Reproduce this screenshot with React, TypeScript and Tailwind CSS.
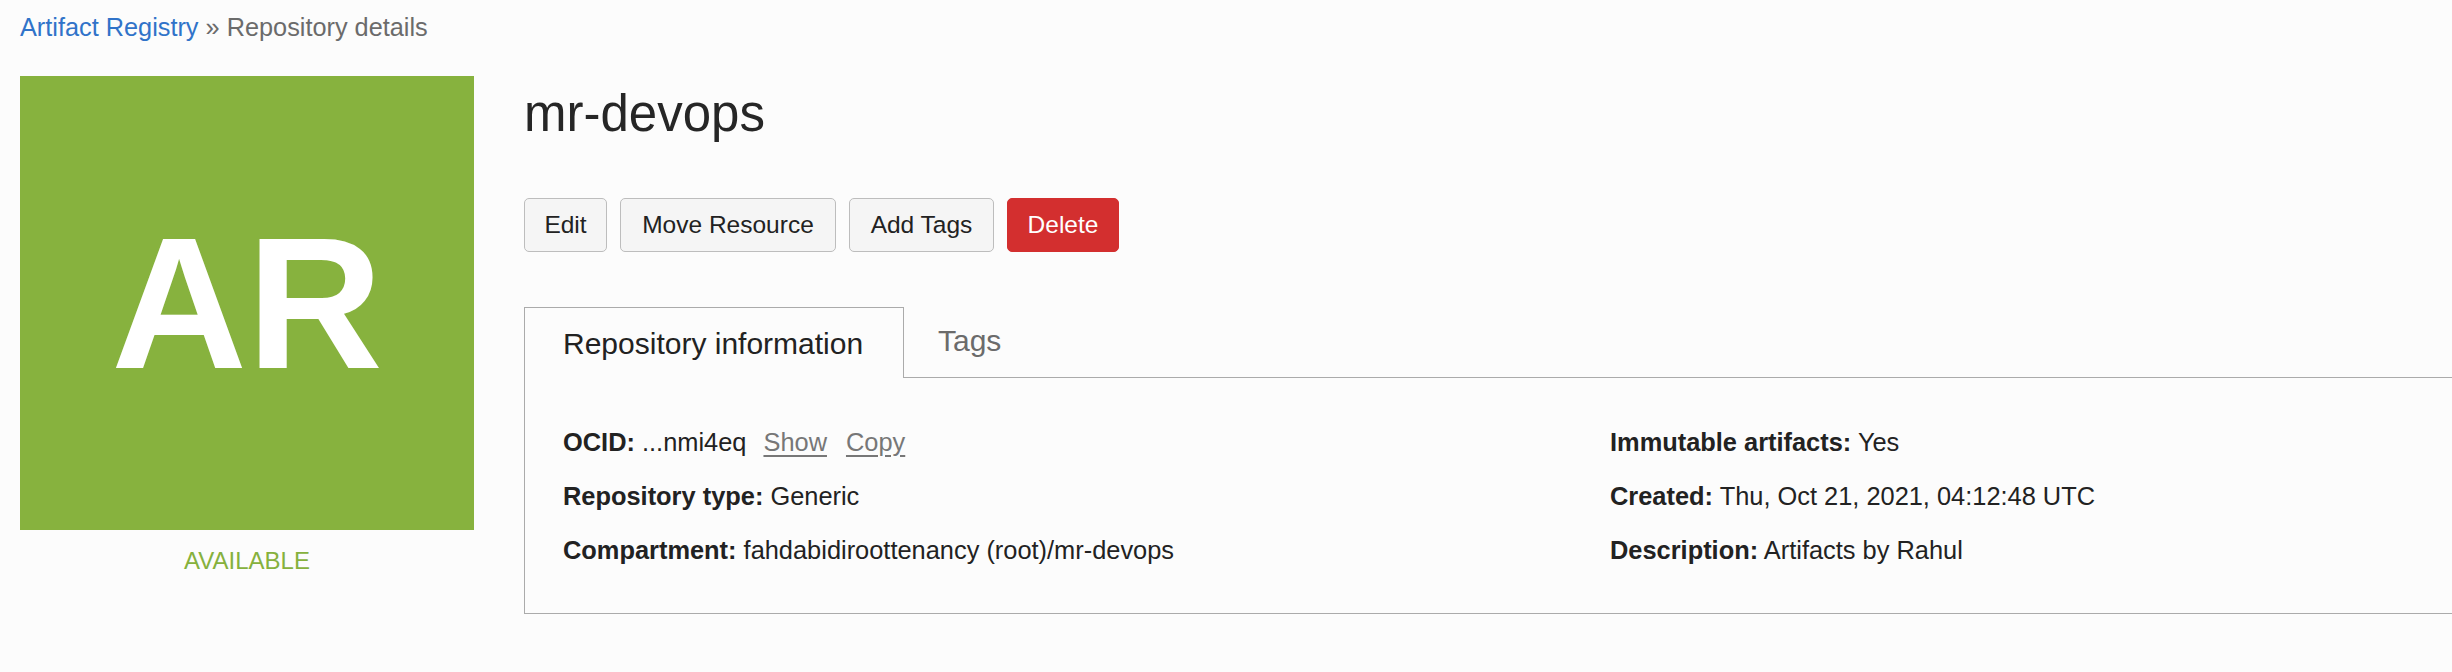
import React from 'react';

const font = { fontFamily: '"Liberation Sans", Arial, Helvetica, sans-serif' };

function ActionButton({ label, width, danger }: { label: string; width: string; danger?: boolean }) {
  return (
    <button
      className={
        danger
          ? `${width} h-[54px] flex items-center justify-center rounded-[5px] border border-[#d32f2f] bg-[#d32f2f] text-white text-[24.5px]`
          : `${width} h-[54px] flex items-center justify-center rounded-[5px] border border-[#bdbdbd] bg-[#f5f5f5] text-[#222] text-[24.5px]`
      }
    >
      {label}
    </button>
  );
}

function Field({ label, children }: { label: string; children: React.ReactNode }) {
  return (
    <div className="h-[54px] leading-[54px] text-[25.4px] text-[#222] whitespace-nowrap">
      <span className="font-bold">{label}</span> {children}
    </div>
  );
}

export default function App() {
  return (
    <div className="min-h-screen w-full overflow-hidden bg-[#fcfcfc] pl-[20px]" style={font}>
      {/* breadcrumb */}
      <div className="pt-[9px] text-[25.3px] leading-[36px]">
        <span className="text-[#3073c9]">Artifact Registry</span>
        <span className="text-[#6b6b6b]"> » Repository details</span>
      </div>

      <div className="mt-[31px] flex">
        {/* resource badge */}
        <div className="w-[454px] shrink-0 flex flex-col items-center">
          <div className="w-[454px] h-[454px] bg-[#87b23e] flex items-center justify-center">
            <span className="text-white font-bold text-[188px] leading-none">AR</span>
          </div>
          <div className="mt-[13px] text-[24px] leading-[36px] text-[#86b13d]">AVAILABLE</div>
        </div>

        {/* details */}
        <div className="ml-[50px] flex-1 min-w-0">
          <h1 className="mt-[12px] text-[51px] leading-[51px] text-[#262626]">mr-devops</h1>

          <div className="mt-[59px] flex gap-[13px]">
            <ActionButton label="Edit" width="w-[83px]" />
            <ActionButton label="Move Resource" width="w-[216px]" />
            <ActionButton label="Add Tags" width="w-[145px]" />
            <ActionButton label="Delete" width="w-[112px]" danger />
          </div>

          {/* tabs */}
          <div className="mt-[55px] flex">
            <div className="w-[380px] h-[71px] flex items-center pl-[38px] border-t border-l border-r border-[#ababab] bg-[#fcfcfc] text-[30px] text-[#222] whitespace-nowrap">
              Repository information
            </div>
            <div className="flex-1 h-[71px] flex items-center pl-[34px] pb-[3px] border-b border-[#ababab] text-[30px] text-[#6b6b6b]">
              Tags
            </div>
          </div>

          <div className="border-l border-b border-[#ababab] pl-[38px] pt-[37px] pb-[36px] grid grid-cols-[1047px_1fr]">
            <div>
              <Field label="OCID:">
                ...nmi4eq
                <span className="ml-[17px] text-[#777] underline underline-offset-[4px]">Show</span>
                <span className="ml-[19px] text-[#777] underline underline-offset-[4px]">Copy</span>
              </Field>
              <Field label="Repository type:">Generic</Field>
              <Field label="Compartment:">fahdabidiroottenancy (root)/mr-devops</Field>
            </div>
            <div>
              <Field label="Immutable artifacts:">Yes</Field>
              <Field label="Created:">Thu, Oct 21, 2021, 04:12:48 UTC</Field>
              <Field label="Description:">Artifacts by Rahul</Field>
            </div>
          </div>
        </div>
      </div>
    </div>
  );
}
